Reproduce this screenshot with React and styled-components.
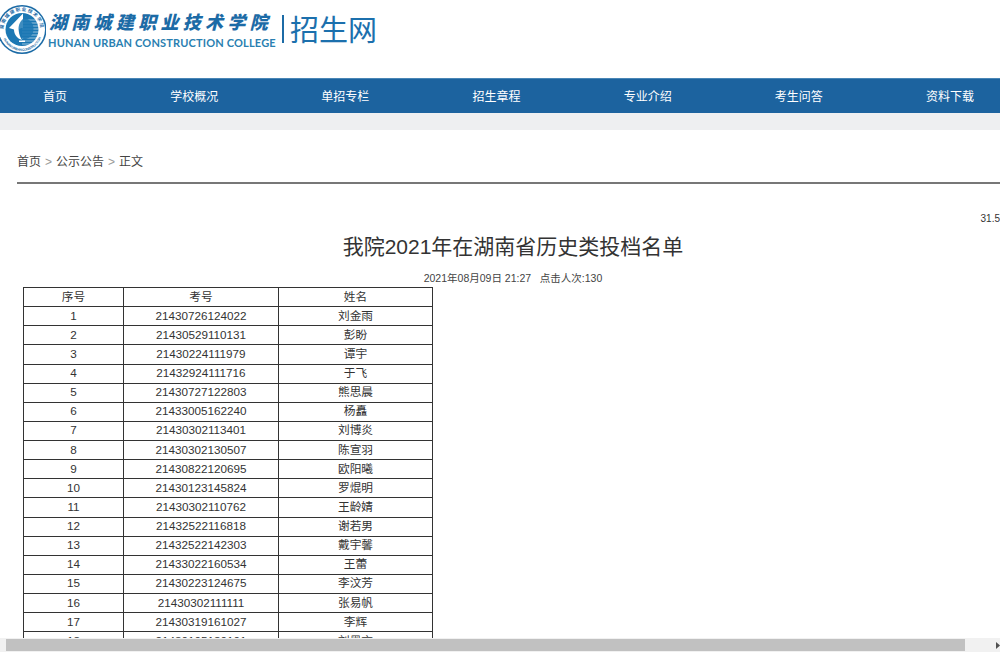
import React from 'react';
import styled, { createGlobalStyle } from 'styled-components';

const GlobalStyle = createGlobalStyle`
  html, body {
    margin: 0;
    padding: 0;
    height: 100%;
    overflow: hidden;
    background: #fff;
  }
  body {
    font-family: "Liberation Sans", "Noto Sans CJK SC", sans-serif;
    color: #333;
  }
`;

const Page = styled.div`
  height: 652px;
  display: flex;
  flex-direction: column;
`;

const Viewport = styled.div`
  flex: 1;
  min-height: 0;
  overflow: hidden;
`;

const Header = styled.header`
  height: 78px;
  display: flex;
  align-items: flex-start;
  box-sizing: border-box;
  padding-top: 4px;
`;

const Seal = styled.svg`
  width: 46px;
  height: 51px;
  flex: none;
`;

const Brand = styled.div`
  margin-left: 2px;
  width: 232px;
  padding-top: 5px;
  display: flex;
  flex-direction: column;
`;

const BrandCn = styled.div`
  font-family: "Noto Sans CJK SC", sans-serif;
  font-weight: 900;
  font-style: italic;
  font-size: 18px;
  line-height: 24px;
  letter-spacing: 4.3px;
  padding-left: 1px;
  color: #1c6ba6;
  white-space: nowrap;
`;

const BrandEn = styled.div`
  font-family: "Lato", sans-serif;
  font-weight: 700;
  font-size: 11px;
  line-height: 15px;
  letter-spacing: 0.17px;
  margin-top: 2px;
  color: #2a7fb1;
  white-space: nowrap;
`;

const Divider = styled.div`
  width: 2px;
  height: 28px;
  margin: 11px 6px 0 2px;
  background: #1c6ba6;
`;

const SiteName = styled.div`
  font-family: "Noto Sans CJK SC", sans-serif;
  font-weight: 400;
  font-size: 29px;
  line-height: 42px;
  margin-top: 3px;
  color: #1c70ad;
`;

const Nav = styled.nav`
  height: 35px;
  background: #1c639f;
  border-top: 1px solid #4a86b6;
  box-sizing: border-box;
  display: flex;
  justify-content: space-between;
  align-items: center;
  padding: 0 26px 2px 43px;
`;

const NavItem = styled.a`
  font-size: 12px;
  color: #fff;
  font-family: "Noto Sans CJK SC", sans-serif;
`;

const Band = styled.div`
  height: 17px;
  background: #eeeff1;
`;

const Crumbs = styled.div`
  margin-left: 17px;
  height: 54px;
  box-sizing: border-box;
  padding-top: 24px;
  border-bottom: 2px solid #777;
  font-size: 12px;
  line-height: 17px;
  color: #444;
`;

const Sep = styled.span`
  color: #999;
  margin: 0 4px;
`;

const Counter = styled.div`
  text-align: right;
  font-size: 10px;
  line-height: 14px;
  margin-top: 28px;
  color: #333;
`;

const Title = styled.h1`
  margin: 5px 0 0;
  padding-left: 26px;
  text-align: center;
  font-weight: 400;
  font-size: 21px;
  line-height: 32px;
  color: #333;
`;

const Meta = styled.div`
  margin-top: 7px;
  padding-left: 26px;
  text-align: center;
  font-size: 10.5px;
  line-height: 16px;
  color: #444;
`;

const Table = styled.table`
  margin: 1px 0 0 23px;
  width: 409px;
  table-layout: fixed;
  border-collapse: collapse;
  font-size: 11.7px;
  color: #333;
`;

const Cell = styled.td`
  border: 1px solid #333;
  height: 16.125px;
  padding: 0 0 2px;
  text-align: center;
  line-height: 15px;
`;

const Scrollbar = styled.div`
  height: 14px;
  flex: none;
  display: flex;
  align-items: center;
  background: #f1f1f1;
`;

const Thumb = styled.div`
  height: 12px;
  width: 959px;
  margin-left: 6px;
  background: #c1c1c1;
`;

const Arrow = styled.svg`
  width: 4px;
  height: 7px;
  margin-left: auto;
  fill: #505050;
`;

const navItems = ['首页', '学校概况', '单招专栏', '招生章程', '专业介绍', '考生问答', '资料下载'];

const rows = [
  ['1', '21430726124022', '刘金雨'],
  ['2', '21430529110131', '彭盼'],
  ['3', '21430224111979', '谭宇'],
  ['4', '21432924111716', '于飞'],
  ['5', '21430727122803', '熊思晨'],
  ['6', '21433005162240', '杨矗'],
  ['7', '21430302113401', '刘博炎'],
  ['8', '21430302130507', '陈宣羽'],
  ['9', '21430822120695', '欧阳曦'],
  ['10', '21430123145824', '罗焜明'],
  ['11', '21430302110762', '王龄婧'],
  ['12', '21432522116818', '谢若男'],
  ['13', '21432522142303', '戴宇馨'],
  ['14', '21433022160534', '王蕾'],
  ['15', '21430223124675', '李汶芳'],
  ['16', '21430302111111', '张易帆'],
  ['17', '21430319161027', '李辉'],
  ['18', '21430105180101', '刘墨言'],
];

const stripes = [16, 19, 22, 25, 28, 31, 34, 37, 40];

function SealIcon() {
  return (
    <Seal viewBox="2 0 46 51">
      <defs>
        <path id="sealRing" d="M5.5 25.5a18.5 18.5 0 1 1 37 0" />
        <path id="sealRingLow" d="M4 27a20 20 0 0 0 40 0" />
      </defs>
      <circle cx="24" cy="25.5" r="24.5" fill="#1c6ba6" />
      <circle cx="24" cy="25.5" r="23" fill="#fff" />
      <circle cx="24" cy="25.5" r="16.5" fill="#1c78b4" />
      <text fontSize="4.6" fill="#1c6ba6" fontFamily="Noto Sans CJK SC" fontWeight="700">
        <textPath href="#sealRing" textLength="56">湖南城建职业技术学院</textPath>
      </text>
      <text fontSize="3.4" fill="#1c6ba6" fontFamily="Liberation Sans" fontWeight="700">
        <textPath href="#sealRingLow" startOffset="8" textLength="48">HUNAN URBAN CONSTRUCTION</textPath>
      </text>
      {stripes.map((y) => (
        <rect key={y} x="24" y={y - 0.5} width="17" height="1" fill="#fff" opacity="0.55" />
      ))}
      <path d="M25 9.5 11 24l5 1.5c0 5 3 9 8 10.5-2-3-3-6-3-10 0-1.500 2-2 4-2z" fill="#fff" />
      <path d="M26 14c-4 3-5.500 7-5.500 11 0 4 2 8 5.500 10.500 6-1 9.500-5 9.500-10.500S32 15 26 14z" fill="#1c78b4" opacity="0.85" />
      <rect x="21" y="36.500" width="6" height="1.500" fill="#fff" />
    </Seal>
  );
}

export default function App() {
  return (
    <Page>
      <GlobalStyle />
      <Viewport>
        <Header>
          <SealIcon />
          <Brand>
            <BrandCn>湖南城建职业技术学院</BrandCn>
            <BrandEn>HUNAN URBAN CONSTRUCTION COLLEGE</BrandEn>
          </Brand>
          <Divider />
          <SiteName>招生网</SiteName>
        </Header>
        <Nav>
          {navItems.map((item) => (
            <NavItem key={item}>{item}</NavItem>
          ))}
        </Nav>
        <Band />
        <Crumbs>
          首页<Sep>&gt;</Sep>公示公告<Sep>&gt;</Sep>正文
        </Crumbs>
        <Counter>31.5</Counter>
        <Title>我院2021年在湖南省历史类投档名单</Title>
        <Meta>2021年08月09日 21:27 &nbsp; 点击人次:130</Meta>
        <Table>
          <colgroup>
            <col style={{ width: 100 }} />
            <col style={{ width: 155 }} />
            <col style={{ width: 154 }} />
          </colgroup>
          <tbody>
            <tr>
              <Cell>序号</Cell>
              <Cell>考号</Cell>
              <Cell>姓名</Cell>
            </tr>
            {rows.map((row) => (
              <tr key={row[0]}>
                <Cell>{row[0]}</Cell>
                <Cell>{row[1]}</Cell>
                <Cell>{row[2]}</Cell>
              </tr>
            ))}
          </tbody>
        </Table>
      </Viewport>
      <Scrollbar>
        <Thumb />
        <Arrow viewBox="0 0 4 7">
          <path d="M0 0l4 3.500L0 7z" />
        </Arrow>
      </Scrollbar>
    </Page>
  );
}
